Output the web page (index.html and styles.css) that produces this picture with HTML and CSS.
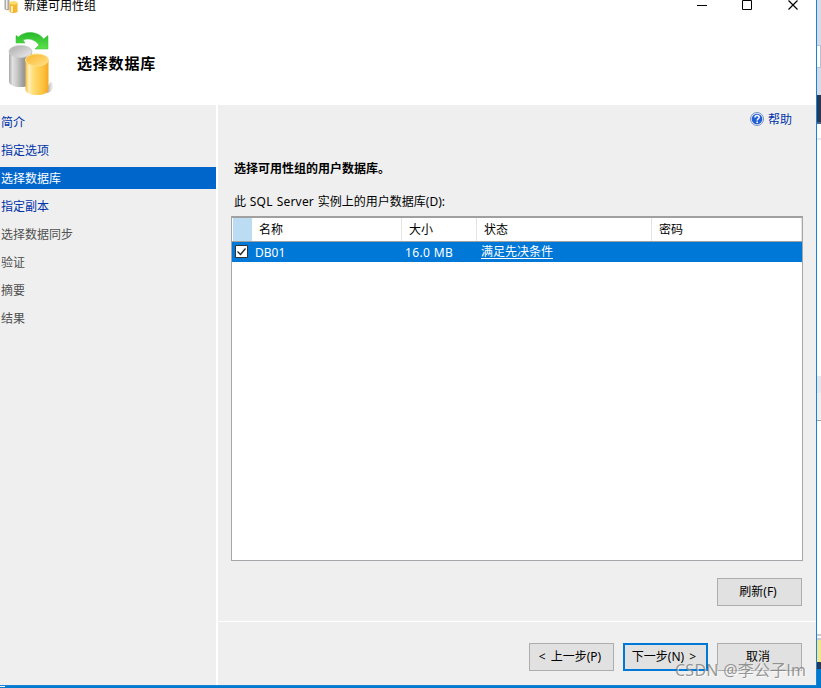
FILE: index.html
```
<!DOCTYPE html>
<html lang="zh-CN">

<head>
    <meta charset="utf-8">
    <title>新建可用性组</title>
    <link rel="stylesheet" href="styles.css">
</head>

<body>
    <div class="screen">
        <div class="window">
            <div class="header">
                <div class="title-bar">
                    <svg class="title-icon" width="15" height="14" viewBox="0 0 15 14">
                        <path d="M.5 0h5v10q-3 1-5-1z" fill="#aaa" />
                        <path d="M2 0h1.500v9h-1.500z" fill="#eee" />
                        <path d="M5.500 2.500q4-2 8 0v9.500q-4 2-8 0z" fill="#f7b52c" />
                        <ellipse cx="9.500" cy="3" rx="4" ry="1.700" fill="#ffdc70" />
                        <path d="M7 6h2v6h-2z" fill="#fff0c0" />
                    </svg>
                    <span class="title-text">新建可用性组</span>
                    <svg class="title-btns" width="106" height="12" viewBox="0 0 106 12" fill="none" stroke="#000">
                        <path d="M0 5.500h10" />
                        <path d="M45.500 .5h9v9h-9z" />
                        <path d="M91.500 .5l9 9M100.500 .5l-9 9" stroke-width="1.200" />
                    </svg>
                </div>
                <div class="banner">
                    <svg class="logo" width="50" height="68" viewBox="0 0 50 68">
                        <defs>
                            <linearGradient id="gray">
                                <stop offset="0" stop-color="#a5a5a5" />
                                <stop offset=".15" stop-color="#e2e2e2" />
                                <stop offset=".35" stop-color="#c8c8c8" />
                                <stop offset=".65" stop-color="#969696" />
                                <stop offset="1" stop-color="#a8a8a8" />
                            </linearGradient>
                            <linearGradient id="gold">
                                <stop offset="0" stop-color="#f8b93a" />
                                <stop offset=".15" stop-color="#fff0bb" />
                                <stop offset=".35" stop-color="#ffdc72" />
                                <stop offset=".75" stop-color="#fdc33f" />
                                <stop offset="1" stop-color="#f6a722" />
                            </linearGradient>
                            <linearGradient id="lid" x1="0" y1="0" x2="1" y2="1">
                                <stop offset="0" stop-color="#a9a9a9" />
                                <stop offset="1" stop-color="#eee" />
                            </linearGradient>
                            <linearGradient id="goldlid" x1="0" y1="0" x2="1" y2="1">
                                <stop offset="0" stop-color="#fbb52c" />
                                <stop offset="1" stop-color="#ffe187" />
                            </linearGradient>
                            <linearGradient id="green" x1="0" y1="0" x2="0" y2="1">
                                <stop offset="0" stop-color="#27b92b" />
                                <stop offset="1" stop-color="#5be24a" />
                            </linearGradient>
                            <linearGradient id="shade">
                                <stop offset="0" stop-color="#777" />
                                <stop offset="1" stop-color="#fff" />
                            </linearGradient>
                        </defs>
                        <path d="M39 64q2-9 5-11q4 1 2 6q-2 5-7 5z" fill="url(#shade)" opacity=".7" />
                        <path d="M2 22v30c0 4 5 6 11.500 6s11.500-2 11.500-6v-30z" fill="url(#gray)" />
                        <ellipse cx="13.500" cy="22.500" rx="11.500" ry="6" fill="url(#lid)" stroke="#ccc" />
                        <path d="M18.500 31v29c0 4 5 6 11.500 6s11.500-2 11.500-6v-29z" fill="url(#gold)" />
                        <ellipse cx="30" cy="31" rx="11.500" ry="6" fill="url(#goldlid)" stroke="#ffdf83" />
                        <path d="M9 6.500l2.500 1.500c6-6.500 20-6 25 2l4.500-3.500v13.500h-13l4-4c-4-6-11.500-7-16-5l2 3h-9z" fill="url(#green)" stroke="#35bd35" stroke-width=".5" />
                    </svg>
                    <h1 class="banner-title">选择数据库</h1>
                </div>
            </div>
            <div class="main">
                <ul class="nav">
                    <li class="nav-item">简介</li>
                    <li class="nav-item">指定选项</li>
                    <li class="nav-item active">选择数据库</li>
                    <li class="nav-item">指定副本</li>
                    <li class="nav-item disabled">选择数据同步</li>
                    <li class="nav-item disabled">验证</li>
                    <li class="nav-item disabled">摘要</li>
                    <li class="nav-item disabled">结果</li>
                </ul>
                <div class="content">
                    <div class="page">
                        <div class="help">
                            <svg width="14" height="14" viewBox="0 0 14 14">
                                <circle cx="7" cy="7" r="6.500" fill="#e8effb" stroke="#7791c4" />
                                <circle cx="7" cy="7" r="5.300" fill="#2360d5" />
                                <path d="M5 5.500c0-2.700 4.200-2.500 4.200-.2c0 1.500-2 1.500-2 3.200" fill="none" stroke="#fff" stroke-width="1.500" />
                                <path d="M6.400 9.500h1.600v1.500h-1.600z" fill="#fff" />
                            </svg>
                            <span class="help-text">帮助</span>
                        </div>
                        <h2 class="page-title">选择可用性组的用户数据库。</h2>
                        <div class="label">此 <span class="latin">SQL Server</span> 实例上的用户数据库(D):</div>
                        <div class="grid">
                            <div class="row head">
                                <div class="cell check"></div>
                                <div class="cell name">名称</div>
                                <div class="cell size">大小</div>
                                <div class="cell state">状态</div>
                                <div class="cell pwd">密码</div>
                            </div>
                            <div class="row selected">
                                <div class="cell check">
                                    <svg width="13" height="13" viewBox="0 0 13 13">
                                        <path d="M.5 .5h12v12h-12z" fill="#fff" stroke="#333" />
                                        <path d="M2.500 6.500l3 3l5-6" fill="none" stroke="#222" stroke-width="1.300" />
                                    </svg>
                                </div>
                                <div class="cell name">DB01</div>
                                <div class="cell size">16.0 MB</div>
                                <div class="cell state"><span class="link">满足先决条件</span></div>
                                <div class="cell pwd"></div>
                            </div>
                        </div>
                        <div class="refresh">
                            <button class="btn">刷新(F)</button>
                        </div>
                    </div>
                    <div class="footer">
                        <button class="btn">&lt; 上一步(P)</button>
                        <button class="btn default">下一步(N) &gt;</button>
                        <button class="btn">取消</button>
                    </div>
                </div>
            </div>
        </div>
        <!-- 后面窗口露出的边缘 -->
        <div class="behind">
            <div class="b-tool"></div>
            <div class="b-input"></div>
            <div class="b-tool2"></div>
            <div class="b-tab"></div>
            <div class="b-line"></div>
            <div class="b-doc"></div>
            <div class="b-panel"></div>
            <div class="b-doc2"></div>
            <div class="b-yellow"></div>
            <div class="b-dark"></div>
            <div class="b-status"></div>
        </div>
    </div>
    <div class="taskbar"><span class="taskbar-mark"></span></div>
    <div class="watermark">CSDN @李公子lm</div>
</body>

</html>
```
FILE: styles.css
```
* {
    box-sizing: border-box;
}

body {
    margin: 0;
    width: 821px;
    height: 688px;
    overflow: hidden;
    position: relative;
    background: #fff;
    color: #000;
    font: 12px/18px "Noto Sans", "Noto Sans CJK SC", sans-serif;
}

ul,
h1,
h2 {
    margin: 0;
    padding: 0;
    list-style: none;
}

svg {
    display: block;
    flex: none;
}

.screen {
    display: flex;
    height: 686px;
}

.window {
    width: 817px;
    border-right: 1px solid #1883d7;
    border-bottom: 1px solid #1883d7;
    display: flex;
    flex-direction: column;
}

.header {
    height: 105px;
    background: #fff;
}

.title-bar {
    height: 28px;
    display: flex;
    align-items: flex-start;
    padding-left: 4px;
}

.title-text {
    margin-left: 5px;
    height: 12px;
    line-height: 12px;
}

.title-btns {
    margin-left: auto;
    margin-right: 13px;
}

.banner {
    display: flex;
    align-items: center;
    padding-left: 7px;
    height: 70px;
}

.banner-title {
    margin-left: 20px;
    font-size: 15px;
    line-height: 20px;
    letter-spacing: .8px;
}

.main {
    flex: 1;
    display: flex;
}

.nav {
    width: 218px;
    padding-top: 6px;
    border-right: 2px solid #fff;
    background: #efefef;
}

.nav-item {
    height: 22px;
    line-height: 22px;
    margin-bottom: 6px;
    padding: 1px 0 0 1px;
    color: #0033a8;
}

.nav-item.active {
    background: #0066cc;
    color: #fff;
}

.nav-item.disabled {
    color: #505050;
}

.content {
    flex: 1;
    background: #efefef;
}

.page {
    height: 517px;
    padding: 5px 13px 0;
    border-bottom: 1px solid #fff;
}

.help {
    display: flex;
    align-items: center;
    justify-content: flex-end;
    gap: 4px;
    height: 18px;
    padding-right: 11px;
    color: #0033a8;
}

.help-text {
    padding-top: 2px;
}

.page-title {
    margin: 31px 0 0 3px;
    font-size: 12px;
    line-height: 20px;
}

.label {
    margin: 14px 0 5px 3px;
    line-height: 18px;
    word-spacing: .7px;
}

.latin {
    letter-spacing: .2px;
}

.grid {
    width: 572px;
    height: 345px;
    border: 1px solid #a5a5aa;
    border-top: 2px solid #a0a0a0;
    background: #fff;
}

.row {
    display: flex;
}

.row.head {
    height: 24px;
    line-height: 24px;
    border-bottom: 1px solid #a0a0a0;
}

.row.selected {
    height: 20px;
    line-height: 22px;
    background: #0078d7;
    color: #fff;
}

.head .cell {
    border-right: 1px solid #e5e5e5;
    padding-left: 7px;
}

.selected .cell {
    padding-left: 3px;
}

.cell.check {
    width: 20px;
}

.head .check {
    background: #bcdcf4;
    border: 0;
    margin-left: 1px;
    width: 19px;
}

.selected .check {
    padding: 3px 0 0 3px;
}

.cell.name {
    width: 150px;
}

.cell.size {
    width: 75px;
}

.selected .size {
    letter-spacing: .35px;
}

.cell.state {
    width: 175px;
}

.selected .state {
    line-height: 20px;
    padding-left: 4px;
}

.cell.pwd {
    width: 150px;
}

.link {
    text-decoration: underline;
    text-underline-offset: 2px;
}

.refresh {
    display: flex;
    justify-content: flex-end;
    padding: 17px 1px 0 0;
}

.btn {
    width: 85px;
    height: 28px;
    padding: 0 3px 0 0;
    border: 1px solid #adadad;
    background: #e1e1e1;
    color: #000;
    font: inherit;
    white-space: nowrap;
    word-spacing: 2px;
}

.btn.default {
    border: 2px solid #0078d7;
}

.footer {
    display: flex;
    justify-content: flex-end;
    gap: 9px;
    padding: 21px 14px 0 0;
}

.behind {
    width: 4px;
    display: flex;
    flex-direction: column;
}

.b-tool {
    height: 45px;
    background: #d6dbe9;
}

.b-input {
    height: 23px;
    border: 1px solid #b8c1d6;
    border-left: 0;
}

.b-tool2 {
    height: 27px;
    background: #d6dbe9;
}

.b-tab {
    height: 29px;
    background: #293955;
    border-bottom: 2px solid #4d6082;
}

.b-line {
    height: 16px;
    border-bottom: 2px solid #e6e7ed;
}

.b-doc {
    height: 236px;
}

.b-panel {
    height: 45px;
    background: #efefef;
    border-top: 17px solid #e6e7ed;
    border-bottom: 1px solid #a5a5a5;
}

.b-doc2 {
    height: 219px;
    border-bottom: 6px double #ccc;
}

.b-yellow {
    height: 22px;
    background: #f0e68c;
}

.b-dark {
    height: 7px;
    background: #293955;
}

.b-status {
    flex: 1;
    background: #007acc;
}

.taskbar {
    height: 2px;
    background: #007acc;
}

.taskbar-mark {
    display: block;
    width: 5px;
    height: 1px;
    background: #fff;
}

.watermark {
    position: absolute;
    left: 675px;
    top: 660px;
    font-size: 16px;
    line-height: 20px;
    letter-spacing: .25px;
    white-space: nowrap;
    color: rgba(120, 120, 120, .75);
    text-shadow: 1px 1px 0 rgba(255, 255, 255, .6);
}
```
